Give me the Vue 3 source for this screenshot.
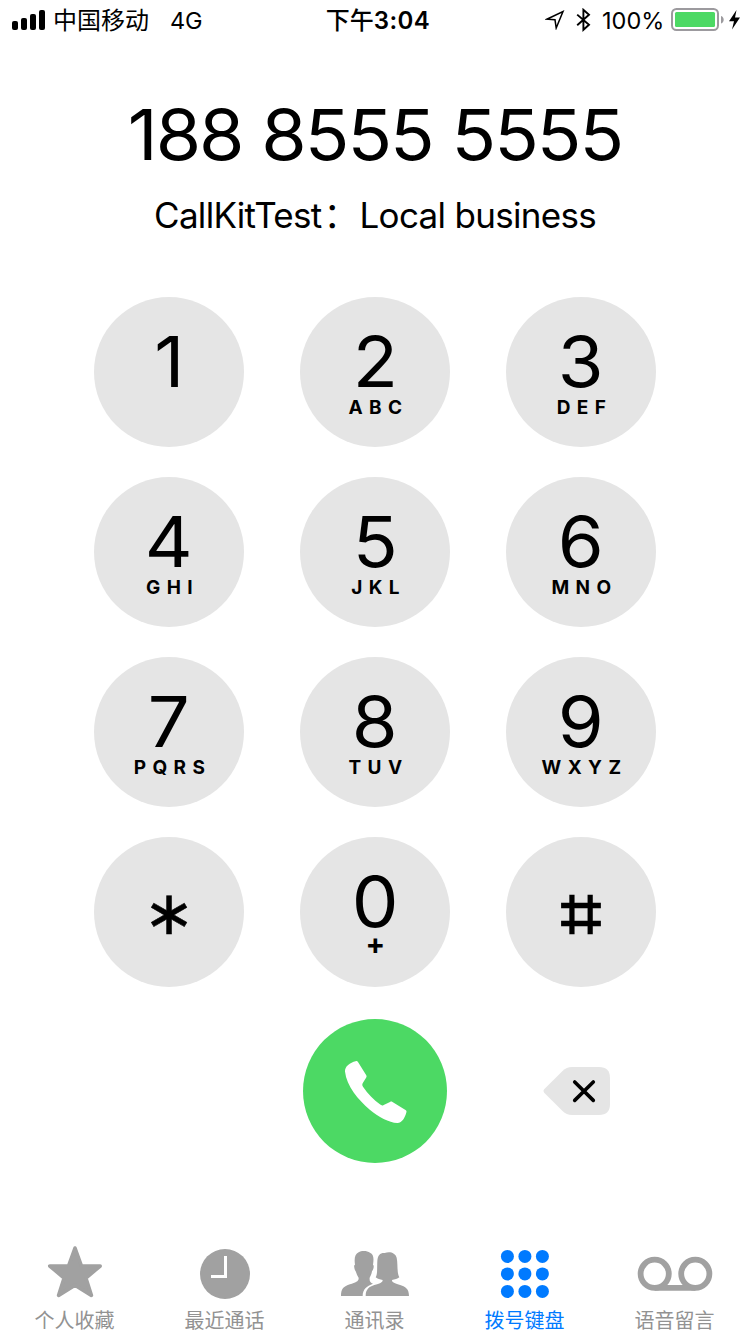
<script setup>
const keys = [
  { digit: '1', letters: '' },
  { digit: '2', letters: 'ABC' },
  { digit: '3', letters: 'DEF' },
  { digit: '4', letters: 'GHI' },
  { digit: '5', letters: 'JKL' },
  { digit: '6', letters: 'MNO' },
  { digit: '7', letters: 'PQRS' },
  { digit: '8', letters: 'TUV' },
  { digit: '9', letters: 'WXYZ' },
  { digit: '∗', symbol: 'star' },
  { digit: '0', letters: '+', plus: true },
  { digit: '⌗', symbol: 'hash' },
]
const tabs = [
  { id: 'favorites', label: '个人收藏' },
  { id: 'recents', label: '最近通话' },
  { id: 'contacts', label: '通讯录' },
  { id: 'keypad', label: '拨号键盘' },
  { id: 'voicemail', label: '语音留言' },
]
const dots = [0, 1, 2].flatMap((r) => [0, 1, 2].map((c) => ({ x: 22.4 + c * 17.5, y: 14.4 + r * 17.5 })))
</script>

<template>
  <div class="screen">
    <header class="status">
      <div class="left">
        <svg class="signal" width="34" height="20" viewBox="0 0 34 20">
          <rect x="0" y="11" width="6" height="9" rx="2" />
          <rect x="9" y="8" width="6" height="12" rx="2" />
          <rect x="18" y="4" width="6" height="16" rx="2" />
          <rect x="27" y="0" width="6" height="20" rx="2" />
        </svg>
        <span class="carrier">中国移动</span>
        <span class="network">4G</span>
      </div>
      <div class="time"><span class="ampm">下午</span><span>3:04</span></div>
      <div class="right">
        <svg class="location" width="20" height="20" viewBox="0 0 20 20">
          <path d="M1.8 9.2 L18 1.6 L11.2 18 L10 9.8 Z" fill="none" stroke="#000" stroke-width="1.5" />
        </svg>
        <svg class="bluetooth" width="16" height="24" viewBox="0 0 16 24">
          <path d="M1.2 6.6 L13 16.8 L7.4 21.8 L7.4 1.8 L13 6.8 L1.2 17.2" fill="none" stroke="#000" stroke-width="1.9" />
        </svg>
        <span class="percent">100%</span>
        <svg class="battery" width="54" height="24" viewBox="0 0 54 24">
          <rect x="1" y="1" width="46" height="21" rx="4.5" fill="none" stroke="#9c9a9e" stroke-width="2" />
          <rect x="4" y="4" width="40" height="15" rx="1.5" fill="#4cd964" />
          <path d="M50 8 C53.6 9 53.6 14.5 50 15.5 Z" fill="#9c9a9e" />
        </svg>
        <svg class="bolt" width="14" height="22" viewBox="0 0 14 22">
          <path d="M8.5 1 L1 12.2 L6 12.2 L4 20.5 L12 8.6 L7 8.6 Z" />
        </svg>
      </div>
    </header>

    <h1 class="number">188 8555 5555</h1>
    <p class="caption"><span>CallKitTest</span><span class="colon">：</span><span class="kind">Local business</span></p>

    <main class="keypad">
      <button v-for="k in keys" :key="k.digit" class="key" :class="k.symbol">
        <span class="digit">{{ k.digit }}</span>
        <span v-if="k.letters" class="letters" :class="{ plus: k.plus }">{{ k.letters }}</span>
      </button>
    </main>

    <section class="actions">
      <button class="call">
        <svg width="64" height="64" viewBox="0 0 64 64">
          <path d="M11.6 1.2 C12.8 0.8 13.4 1.2 14 2.1 L22.1 15 C22.8 16.2 22.7 16.8 22.1 17.7 L18.8 23 C18 24.3 18.2 25.5 19 26.7 C24 34 29.5 39.4 36.2 44.6 C37.4 45.5 38.4 45.7 39.7 44.9 L46 41.9 C47 41.4 47.6 41.4 48.5 42 L61.5 50 C62.5 50.6 62.7 51.3 62.4 52.3 C61 57.5 58.5 62.8 53.3 63 C45 62.8 34.5 57 25.5 49.5 C14.5 40 2.5 26 1 11.5 C0.7 6.2 6.2 2.5 11.6 1.2 Z" fill="#fff" />
        </svg>
      </button>
      <button class="delete">
        <svg width="68" height="48" viewBox="0 0 68 48">
          <path d="M1.2 22.3 L19.5 4 Q23.5 0 29 0 H56 Q67 0 67 11 V37 Q67 48 56 48 H29 Q23.5 48 19.5 44 L1.2 25.7 Q-0.2 24 1.2 22.3 Z" fill="#e5e5e5" />
          <path d="M31.7 15 L50.3 33.4 M50.3 15 L31.7 33.4" stroke="#000" stroke-width="3.6" stroke-linecap="round" />
        </svg>
      </button>
    </section>

    <nav class="tabs">
      <a v-for="t in tabs" :key="t.id" class="tab" :class="{ active: t.id === 'keypad' }">
        <svg width="80" height="60" viewBox="0 0 80 60" fill="currentColor">
          <path v-if="t.id === 'favorites'" d="M40 6 L46.4 23.8 L65.2 24 L50.9 36 L56.4 53.4 L40 43.2 L23.6 53.4 L29.1 36 L14.8 24 L33.6 23.8 Z" stroke="currentColor" stroke-width="3.6" stroke-linejoin="round" />
          <template v-else-if="t.id === 'recents'">
            <circle cx="40" cy="32" r="25" />
            <path d="M40.5 14 V34.5 H26" fill="none" stroke="#fff" stroke-width="3" />
          </template>
          <g v-else-if="t.id === 'contacts'" transform="translate(-85 -12) scale(.33333)">
            <path d="M273 198 C273 176 281 169 300 163 C316 158 326 155 326 145 C326 140 321 138 319 129 C318 123 314 121 313 113 C312 108 312 105 315 104 C312 84 315 72 326 67 C334 61 352 62 360 68 C371 72 372 85 369 104 C373 106 371 119 366 124 C365 133 361 139 359 143 C358 154 361 158 369 161 C350 168 338 178 338 198 Z" />
            <path d="M347 198 C347 177 358 170 373 165 C389 160 398 158 398 150 C390 149 382 147 377 142 C383 134 381 111 382 94 C383 75 391 68 404 69 C419 63 436 68 440 83 C444 99 440 129 448 142 C443 147 434 149 426 150 C426 158 435 160 448 164 C467 169 477 177 477 198 Z" />
          </g>
          <template v-else-if="t.id === 'keypad'">
            <circle v-for="(d, i) in dots" :key="i" :cx="d.x" :cy="d.y" r="6.5" />
          </template>
          <g v-else fill="none" stroke="currentColor" stroke-width="5.8">
            <circle cx="19.7" cy="31.8" r="14.1" />
            <circle cx="60.3" cy="31.8" r="14.1" />
            <path d="M19.7 45.9 H60.3" />
          </g>
        </svg>
        <span class="label">{{ t.label }}</span>
      </a>
    </nav>
  </div>
</template>

<style>
body {
  background: #fff;
}
</style>

<style scoped>
.screen {
  width: 750px;
  height: 1334px;
  display: flex;
  flex-direction: column;
  overflow: hidden;
  background: #fff;
  color: #000;
  font-family: Inter, 'Noto Sans CJK SC', sans-serif;
}
svg {
  display: block;
  flex: none;
}
button {
  border: 0;
  padding: 0;
  background: none;
  color: inherit;
  font-family: inherit;
}
.status {
  height: 40px;
  display: grid;
  grid-template-columns: 250px 250px 250px;
  font-size: 24px;
  line-height: 42px;
  white-space: nowrap;
}
.left,
.right {
  height: 40px;
  display: flex;
  align-items: center;
}
.left {
  padding-left: 12px;
}
.carrier {
  width: 96px;
  margin-left: 7px;
  padding-top: 2px;
}
.network {
  margin-left: 21px;
  padding-top: 2px;
  font-size: 23.5px;
  letter-spacing: -0.3px;
}
.time {
  display: flex;
  justify-content: center;
  padding-left: 6px;
  font-weight: 600;
  letter-spacing: 0.4px;
}
.ampm {
  font-weight: 500;
  letter-spacing: 0;
}
.right {
  justify-content: flex-end;
  padding-right: 8px;
}
.location {
  margin-right: 2px;
}
.bluetooth {
  margin-left: 9px;
}
.percent {
  width: 63px;
  margin-left: 10px;
  padding-top: 2px;
  font-size: 23.5px;
}
.battery {
  margin-left: 6px;
}
.bolt {
  margin-left: 3px;
}
.number {
  margin: 50px 0 0;
  height: 90px;
  line-height: 90px;
  text-align: center;
  font-size: 70px;
  font-weight: 400;
  letter-spacing: -1.9px;
  white-space: pre;
  transform: scaleX(1.05);
}
.caption {
  margin: 10px 0 0;
  height: 50px;
  line-height: 50px;
  display: flex;
  justify-content: center;
  font-size: 35px;
  letter-spacing: -0.7px;
  white-space: pre;
}
.colon {
  width: 38px;
  text-indent: 2px;
}
.keypad {
  margin: 57px 0 0 94px;
  display: grid;
  grid-template-columns: repeat(3, 150px);
  grid-auto-rows: 150px;
  column-gap: 56px;
  row-gap: 30px;
}
.key {
  display: flex;
  flex-direction: column;
  align-items: center;
  padding-top: 35px;
  border-radius: 50%;
  background: #e5e5e5;
}
.digit {
  height: 60px;
  line-height: 60px;
  font-size: 70px;
  transform: scaleX(1.06);
}
.letters {
  height: 24px;
  margin-top: 4px;
  padding-left: 7px;
  line-height: 24px;
  font-size: 19px;
  font-weight: 650;
  letter-spacing: 6.4px;
}
.plus {
  margin-top: 0;
  font-size: 29px;
}
.star .digit,
.hash .digit {
  font-family: 'DejaVu Sans', sans-serif;
  transform: none;
}
.star .digit {
  margin-top: 11px;
  font-size: 61px;
  -webkit-text-stroke: 0.5px #000;
}
.hash .digit {
  margin-top: 12px;
  font-size: 71px;
  -webkit-text-stroke: 2.4px #000;
}
.actions {
  margin: 32px 0 0 303px;
  display: flex;
  align-items: center;
  gap: 96px;
}
.call {
  width: 144px;
  height: 144px;
  padding: 2px 0 0 2px;
  display: grid;
  place-items: center;
  border-radius: 50%;
  background: #4cd964;
}
.tabs {
  margin-top: 79px;
  display: grid;
  grid-template-columns: repeat(5, 150px);
}
.tab {
  display: flex;
  flex-direction: column;
  align-items: center;
  color: #a1a1a1;
}
.tab.active {
  color: #007aff;
}
.label {
  margin: 5px 0 0 -1px;
  height: 28px;
  line-height: 28px;
  font-size: 20px;
}
.tab:not(.active) .label {
  color: #929292;
}
</style>
